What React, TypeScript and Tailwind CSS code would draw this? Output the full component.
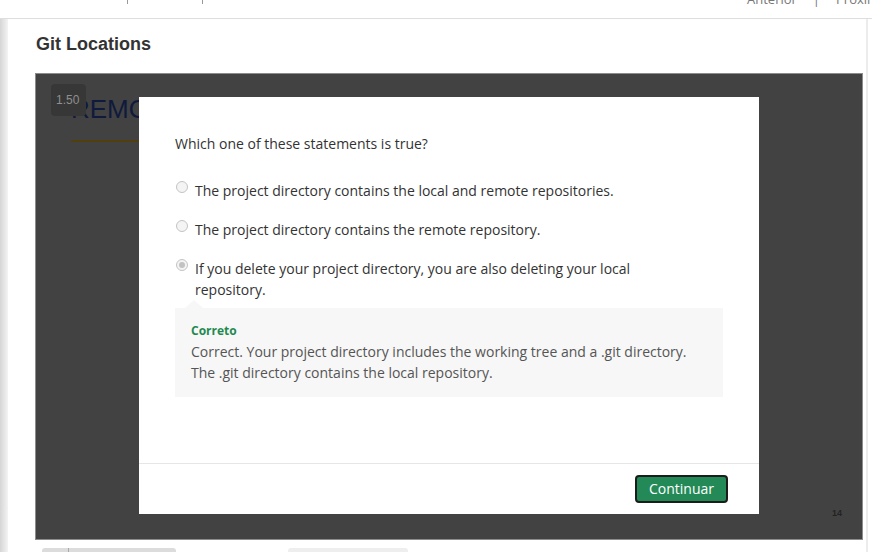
import React from 'react'

const options = [
  { id: 'a', text: 'The project directory contains the local and remote repositories.', checked: false },
  { id: 'b', text: 'The project directory contains the remote repository.', checked: false },
  { id: 'c', text: 'If you delete your project directory, you are also deleting your local repository.', checked: true },
]

function Radio({ checked }: { checked: boolean }) {
  return (
    <span className="mt-[1px] flex h-[12px] w-[12px] shrink-0 items-center justify-center rounded-full border border-[#c4c4c4] bg-[#f4f4f4]">
      {checked && <span className="h-[6px] w-[6px] rounded-full bg-[#c2c2c2]" />}
    </span>
  )
}

function QuizModal() {
  return (
    <div className="absolute left-[103px] top-[23px] flex h-[417px] w-[620px] flex-col bg-white font-['Open_Sans',sans-serif]">
      <div className="flex-1 pl-[36px] pr-[36px] pt-[36px]">
        <p className="text-[14px] leading-[21px] text-[#333]">Which one of these statements is true?</p>

        {/* Answers */}
        <div className="mt-[26px] flex flex-col gap-[18px]">
          {options.map(o => (
            <label key={o.id} className="flex gap-[7px] pl-[1px] pr-[90px]">
              <Radio checked={o.checked} />
              <span className="text-[14px] leading-[21px] text-[#333]">{o.text}</span>
            </label>
          ))}
        </div>

        {/* Feedback */}
        <div className="relative mt-[8px] w-[548px] bg-[#f7f7f7] px-[16px] pb-[14px] pt-[14px]">
          <span className="absolute -top-[8px] left-[10px] h-0 w-0 border-x-[9px] border-b-[8px] border-x-transparent border-b-[#f7f7f7]" />
          <p className="text-[12px] font-bold leading-[17px] text-[#1f8a50]">Correto</p>
          <p className="mt-[2px] text-[14px] leading-[21px] text-[#555]">
            Correct. Your project directory includes the working tree and a .git directory.
            <br />
            The .git directory contains the local repository.
          </p>
        </div>
      </div>

      <div className="flex h-[51px] items-center justify-end border-t border-[#e6e6e6] pr-[31px]">
        <button className="h-[28px] rounded-[4px] border-2 border-[#1c1c1c] bg-[#238a57] px-[12px] text-[14px] leading-none text-white">
          Continuar
        </button>
      </div>
    </div>
  )
}

export default function App() {
  return (
    <div className="h-[552px] w-[872px] overflow-hidden bg-white font-['Liberation_Sans',sans-serif]">
      {/* Top nav (cut off) */}
      <div className="relative h-[19px] border-b border-[#dedede]">
        <span className="absolute left-[127px] top-0 h-[4px] w-px bg-[#999]" />
        <span className="absolute left-[202px] top-0 h-[4px] w-px bg-[#999]" />
        <div className="absolute -top-[10px] left-[747px] flex items-center gap-[16px] whitespace-nowrap font-['Open_Sans',sans-serif] text-[13px] leading-[18px] text-[#777]">
          <span>Anterior</span>
          <span>|</span>
          <span>Próximo</span>
        </div>
      </div>

      <div className="flex">
        <div className="w-[8px] shrink-0 bg-gradient-to-r from-[#d6d6d6] to-[#f3f3f3]" />
        <div className="w-[860px] shrink-0 border-r-2 border-[#ececec] pr-[4px]">
          <div className="w-[856px]">
            <h1 className="pl-[28px] pt-[15px] text-[18px] font-bold leading-[20px] text-[#333]">Git Locations</h1>

            {/* Slide frame */}
            <div className="relative ml-[27px] mt-[19px] h-[467px] w-[828px] overflow-hidden border border-[#8c8c8c] bg-[#424242]">
              <div className="px-[35px] pt-[20px]">
                <p className="text-[26px] leading-[30px] text-[#0f1a3c]">REMOTE REPOSITORY</p>
                <div className="mt-[16px] h-[2px] w-[300px] bg-[#52400c]" />
              </div>

              <div className="absolute left-[15px] top-[10px] flex h-[32px] w-[35px] items-center rounded-[4px] bg-[#373737] pl-[5px] text-[12px] text-[#8f8f8f]">
                1.50
              </div>

              <span className="absolute bottom-[19px] right-[20px] text-[9px] font-bold text-[#222]">14</span>

              <QuizModal />
            </div>

            {/* Controls below the slide (cut off) */}
            <div className="relative mt-[8px] flex h-[10px]">
              <div className="ml-[34px] flex h-[10px] w-[134px] rounded-t-[3px] bg-[#dcdcdc]">
                <span className="ml-[26px] h-full w-px bg-[#aaa]" />
              </div>
              <div className="ml-[112px] h-[10px] w-[120px] rounded-t-[3px] bg-[#eeeeee]" />
            </div>
          </div>
        </div>
      </div>
    </div>
  )
}
